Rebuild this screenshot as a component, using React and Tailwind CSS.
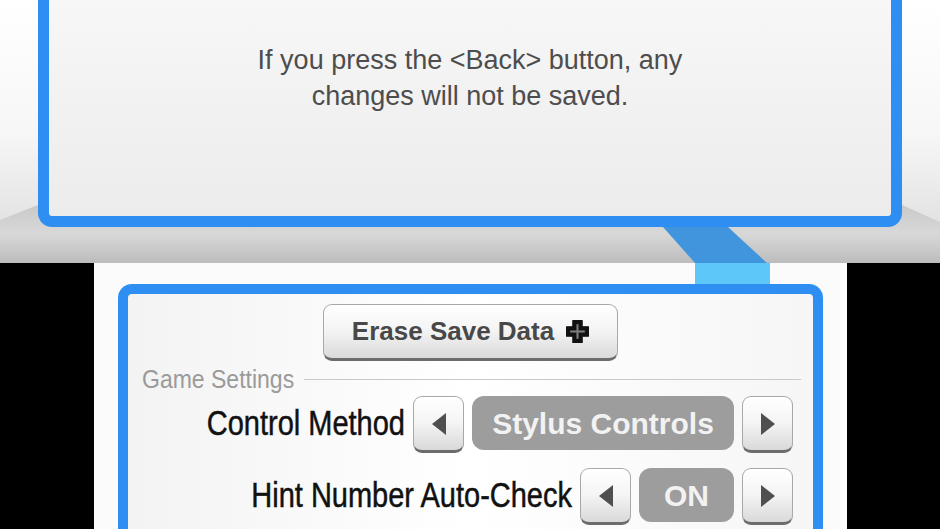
import React from 'react';

// little grey triangle used by the left / right picker buttons
const Arrow = ({ dir }) => (
    <svg width="14" height="22" viewBox="0 0 14 22">
        {dir === 'left' ? (
            <polygon points="14,0 14,22 0,11" fill="#4f4f4f" />
        ) : (
            <polygon points="0,0 0,22 14,11" fill="#4f4f4f" />
        )}
    </svg>
);

const ArrowButton = ({ dir }) => (
    <button className="flex h-[57px] w-[51px] shrink-0 items-center justify-center rounded-[9px] border border-[#a8a8a8] border-b-[3px] border-b-[#6c6c6c] bg-linear-to-b from-white via-[#f4f4f4] to-[#d9d9d9]">
        <Arrow dir={dir} />
    </button>
);

const PlusIcon = () => (
    <svg width="23" height="23" viewBox="0 0 22 22">
        <path d="M6.5 0.5H15.5V6.5H21.5V15.5H15.5V21.5H6.5V15.5H0.5V6.5H6.5Z" fill="#111" stroke="#111" strokeLinejoin="round" />
        <rect x="10" y="4" width="2" height="14" fill="#7d7d7d" />
        <rect x="4" y="10" width="14" height="2" fill="#7d7d7d" />
    </svg>
);

const SettingRow = ({ label, value, pillWidth, className = '' }) => (
    <div className={`flex items-start justify-end gap-[8px] pr-[20px] ${className}`}>
        <span className="inline-block scale-y-[1.2] text-[29px] leading-[54px] text-[#111] [-webkit-text-stroke:0.4px_#111]">
            {label}
        </span>
        <ArrowButton dir="left" />
        <div
            className={`flex h-[54px] ${pillWidth} shrink-0 items-center justify-center rounded-[12px] bg-[#9d9d9d] text-[30px] font-bold text-[#f2f2f2]`}
        >
            {value}
        </div>
        <ArrowButton dir="right" />
    </div>
);

const App = () => {
    return (
        <div className="h-[529px] w-[940px] overflow-hidden bg-black font-['Liberation_Sans',Arial,sans-serif]">
            {/* top screen */}
            <div className="relative h-[263px] overflow-hidden bg-linear-to-b from-white via-[#f7f7f7] to-[#dadada]">
                <div className="absolute inset-x-0 bottom-0 h-[58px] bg-linear-to-b from-[#c9c9c9] via-[#d8d8d8] to-[#bcbcbc] [clip-path:polygon(0_15px,38px_0,902px_0,100%_17px,100%_100%,0_100%)]" />
                <div className="relative flex flex-col">
                    <div className="mx-[38px] h-[227px] rounded-b-[14px] border-x-[11px] border-b-[11px] border-[#2f8ef2] bg-linear-to-b from-[#f7f7f7] to-[#ececec] pt-[42px] text-center text-[27px] leading-[36px] text-[#4d4d4d]">
                        <p>If you press the &lt;Back&gt; button, any</p>
                        <p>changes will not be saved.</p>
                    </div>
                    <svg className="ml-[663px] block" width="107" height="36" viewBox="0 0 107 36">
                        <polygon points="0,0 65,0 104,36 32,36" fill="#4195dc" />
                    </svg>
                </div>
            </div>

            {/* bottom screen */}
            <div className="flex h-[266px]">
                <div className="w-[94px] bg-black" />
                <div className="flex w-[753px] flex-col overflow-hidden bg-[#fbfbfb]">
                    <div className="ml-[601px] h-[21px] w-[75px] shrink-0 bg-[#5cc7f8]" />
                    <div className="mx-[24px] flex-1 rounded-t-[14px] border-x-[10px] border-t-[10px] border-[#2f8ef2] bg-linear-to-r from-[#f3f3f3] via-white to-[#f6f6f6]">
                        <div className="flex justify-center pt-[10px]">
                            <button className="flex h-[57px] w-[295px] items-center justify-center gap-3 rounded-[9px] border border-[#a8a8a8] border-b-[3px] border-b-[#6c6c6c] bg-linear-to-b from-white via-[#f3f3f3] to-[#dadada] text-[26px] font-bold text-[#484848]">
                                <span>Erase Save Data</span>
                                <PlusIcon />
                            </button>
                        </div>

                        <div className="mt-[5px] flex h-[26px] items-center pl-[14px] pr-[12px]">
                            <span className="inline-block scale-y-[1.15] text-[23px] leading-none text-[#9a9a9a]">
                                Game Settings
                            </span>
                            <div className="ml-[10px] h-px flex-1 bg-[#c9c9c9]" />
                        </div>

                        <SettingRow
                            className="mt-[4px]"
                            label="Control Method"
                            value="Stylus Controls"
                            pillWidth="w-[262px]"
                        />
                        <SettingRow
                            className="mt-[15px]"
                            label="Hint Number Auto-Check"
                            value="ON"
                            pillWidth="w-[95px]"
                        />
                    </div>
                </div>
                <div className="flex-1 bg-black" />
            </div>
        </div>
    );
};

export default App;
